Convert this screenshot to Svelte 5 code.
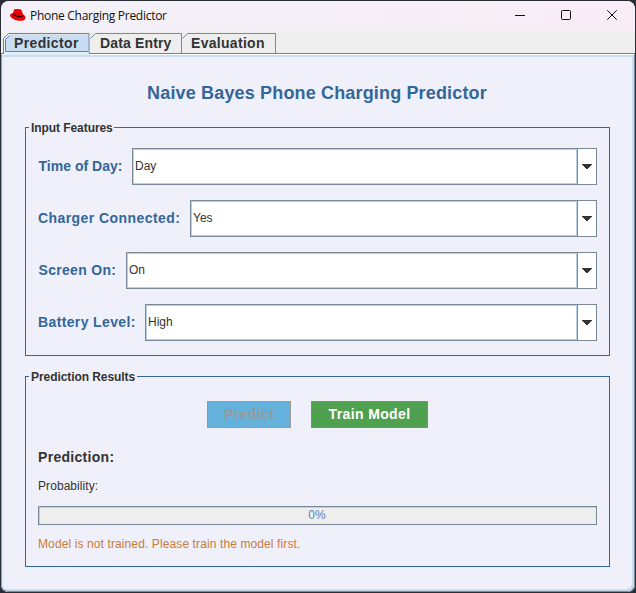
<script>
  const fields = [
    { label: 'Time of Day:', value: 'Day', width: 94, pad: 0.5, ls: 0.02 },
    { label: 'Charger Connected:', value: 'Yes', width: 152, pad: 0, ls: 0.43 },
    { label: 'Screen On:', value: 'On', width: 88, pad: 0.5, ls: 0.3 },
    { label: 'Battery Level:', value: 'High', width: 107, pad: 0, ls: 0.37 }
  ];
</script>

<div class="desktop">
  <div class="window">
    <header class="titlebar">
      <svg class="hat" width="18" height="14" viewBox="0 0 18 14">
        <path d="M4.800 2C6.200.500 7.400 1.200 9 1.200c1.800-.4 3.300.3 3.900 1.800l1.200 3.600c1.900.900 2.700 2.300 2.400 3.700-.5 2.200-3.800 2.800-6.600 2.500C6.200 12.400 2.200 10.300 1.200 8 .6 6.300 2 5.200 4 5.200z" fill="#ee0000"/>
        <path d="M4 5.200c.3 1.900 3.700 3.500 7 3.500 1.700 0 3.100-.5 3-1.500" fill="none" stroke="#250508" stroke-width="1.200"/>
      </svg>
      <span class="caption">Phone Charging Predictor</span>
      <div class="controls">
        <svg width="10" height="12" viewBox="0 0 10 12"><path d="M0 6.500h10" stroke="#111" /></svg>
        <svg width="10" height="12" viewBox="0 0 10 12"><rect x=".5" y="1.500" width="9" height="9" rx="1" fill="none" stroke="#111" /></svg>
        <svg width="10" height="12" viewBox="0 0 10 12"><path d="M.2 1.200l9.600 9.600M9.800 1.200L.2 10.800" stroke="#111" /></svg>
      </div>
    </header>

    <nav class="tabs">
      <div class="tab first">
        <svg width="88" height="24" viewBox="0 0 88 24">
          <path d="M2 21h85v3H2z" fill="#e4eef9"/>
          <path d="M3.500 20.500V8.500L8.500 3.500h78v17z" fill="#c8ddf2"/>
          <path d="M1.500 22V7.500L6.500 2.500h80.500V22" fill="none" stroke="#6382bf"/>
          <path d="M3.500 20.500V8.500L7.500 4.500" fill="none" stroke="#6382bf"/>
          <path d="M3.500 20.500H86" fill="none" stroke="#6382bf"/>
        </svg>
        <span>Predictor</span>
      </div>
      <div class="tab second">
        <svg width="92" height="22" viewBox="0 0 92 22"><path d="M.5 7.500L5.500 2.500H91.500V22" fill="none" stroke="#7a8a99"/></svg>
        <span>Data Entry</span>
      </div>
      <div class="tab third">
        <svg width="94" height="22" viewBox="0 0 94 22"><path d="M.5 7.500L5.500 2.500H93.500V22" fill="none" stroke="#7a8a99"/></svg>
        <span>Evaluation</span>
      </div>
    </nav>

    <main>
      <h1><span>Naive Bayes Phone Charging Predictor</span></h1>
      <section class="group inputs">
        <h2><span class="t1">Input Features</span></h2>
        {#each fields as f}
          <div class="field">
            <span class="label" style="width:{f.width}px;padding-left:{f.pad}px;letter-spacing:{f.ls}px">{f.label}</span>
            <div class="combo">
              <div class="value">{f.value}</div>
              <div class="arrow">
                <svg width="10" height="5" viewBox="0 0 10 5" shape-rendering="crispEdges"><path d="M0 0h10v1H9v1H8v1H7v1H6v1H4V4H3V3H2V2H1V1H0z" fill="#333"/></svg>
              </div>
            </div>
          </div>
        {/each}
      </section>

      <section class="group results">
        <h2><span class="t2">Prediction Results</span></h2>
        <div class="buttons">
          <div class="btn predict">Predict</div>
          <div class="btn train">Train Model</div>
        </div>
        <div class="prediction">Prediction:</div>
        <div class="probability">Probability:</div>
        <div class="progress">0%</div>
        <div class="status">Model is not trained. Please train the model first.</div>
      </section>
    </main>
  </div>
</div>

<style>
  :global(body) { margin: 0; overflow: hidden; }
  * { box-sizing: border-box; }
  .desktop {
    width: 636px; height: 593px; padding: 1px; background: #2c2e36;
    font-family: "Liberation Sans", Arial, sans-serif; color: #333; white-space: nowrap;
  }
  .window { height: 591px; border-radius: 8px 8px 7px 7px; overflow: hidden; background: #eee; display: flex; flex-direction: column; }
  .titlebar {
    height: 30px; flex: none; display: flex; align-items: center; padding-left: 8px;
    background: linear-gradient(90deg, #f4f1f9, #f5eff7 50%, #f9edf6);
  }
  .hat { flex: none; margin-top: -2px; }
  .caption { font: 12px "Open Sans", "Noto Sans", sans-serif; color: #111; margin-left: 3px; margin-top: -1px; letter-spacing: -0.28px; }
  .controls { display: flex; gap: 36px; margin-left: auto; margin-right: 18px; margin-top: -2px; }
  .controls svg { display: block; }
  .tabs { height: 22px; flex: none; display: flex; padding-left: 1px; }
  .tab { flex: none; display: grid; font-size: 14px; font-weight: bold; line-height: 16px; height: 22px; }
  .tab svg, .tab span { grid-area: 1 / 1; display: block; }
  .tab span { padding-top: 4px; z-index: 1; }
  .first { width: 88px; letter-spacing: 0.37px; z-index: 2; }
  .first { position: relative; }
  .first span { padding-left: 12px; }
  .second { width: 92px; letter-spacing: 0.15px; }
  .second span { padding-left: 10px; }
  .third { width: 94px; letter-spacing: 0.3px; }
  .third span { padding-left: 9px; }
  main {
    flex: 1; border-top: 1px solid #6382bf; border-left: 1px solid #8aa5d2; border-right: 1px solid #7a8a99; border-bottom: 1px solid #7a8a99;
    box-shadow: inset 0 1px #fff, inset 0 3px #c8ddf2, inset -2px -2px #c8ddf2, inset 1px 0 #dce8f7;
    background: #f0f0fa; border-radius: 0 0 7px 7px; padding: 29px 24px 0 23px; display: flex; flex-direction: column;
  }
  h1 { margin: 0; height: 44px; font-size: 18px; line-height: 21px; color: #336699; text-align: center; letter-spacing: 0.16px; padding-right: 1px; }
  .group { border: 1px solid #336699; padding: 0 12px; }
  h2 { margin: -8px 0 0 -9px; height: 16px; font-size: 12px; line-height: 16px; color: #333; letter-spacing: -0.07px; }
  h2 span { display: inline-block; height: 16px; background: #f0f0fa; padding-left: 2px; }
  .t1 { width: 85px; }
  .t2 { width: 108px; }
  .inputs { height: 229px; }
  .field { display: flex; height: 37px; margin-bottom: 15px; align-items: center; }
  h2 + .field { margin-top: 12px; }
  .label { flex: none; font-weight: bold; font-size: 14px; line-height: 16px; color: #336699; padding-bottom: 2px; }
  .combo { flex: 1; height: 37px; display: flex; border: 1px solid #7a8a99; background: #fff; }
  .value { flex: 1; border: 1px solid #b8cfe5; font-size: 12px; line-height: 32px; padding-left: 1px; }
  .arrow { width: 19px; border-left: 1px solid #7a8a99; display: flex; align-items: center; justify-content: center; }
  .results { margin-top: 20px; height: 191px; }
  .buttons { display: flex; gap: 20px; justify-content: center; margin-top: 16px; height: 27px; }
  .btn { font-weight: bold; font-size: 14px; line-height: 25px; text-align: center; letter-spacing: 0.37px; }
  .predict { width: 84px; background: #64b2dc; border: 1px solid #999; color: #999; }
  .train { width: 117px; background: #4fa04f; border: 1px solid #7a8a99; color: #fff; }
  .prediction { font-weight: bold; font-size: 14px; line-height: 16px; margin-top: 21px; letter-spacing: 0.3px; }
  .probability { font-size: 12px; line-height: 14px; margin-top: 14px; letter-spacing: 0.07px; }
  .progress { height: 19px; margin-top: 13px; border: 1px solid #7a8a99; box-shadow: inset 1px 1px #b8cfe5; background: #eee; font-size: 12px; line-height: 17px; text-align: center; color: #6382bf; padding-right: 1px; }
  .status { font-size: 12px; line-height: 14px; margin-top: 12px; color: #cc7a33; letter-spacing: 0.11px; }
</style>
